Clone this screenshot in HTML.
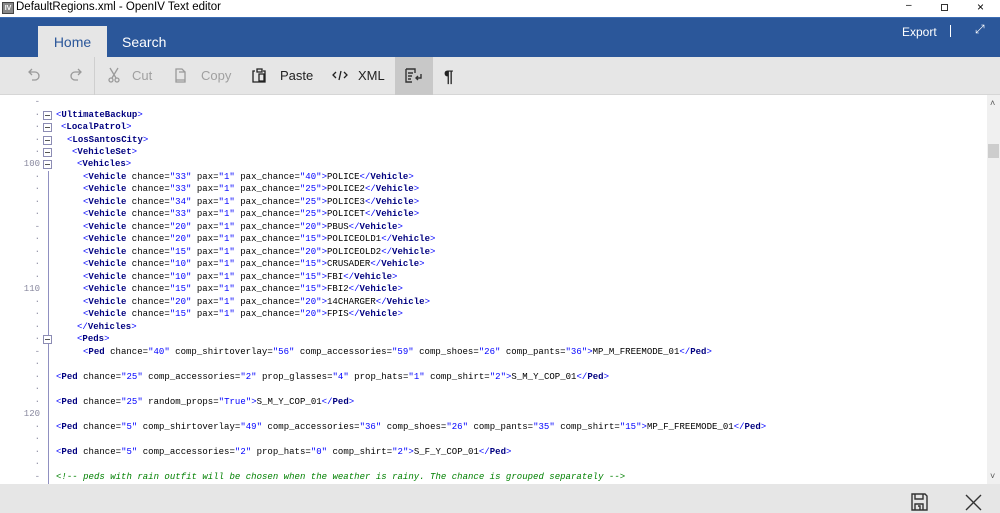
<!DOCTYPE html>
<html><head><meta charset="utf-8"><style>
*{margin:0;padding:0;box-sizing:border-box}
body{width:1000px;height:513px;overflow:hidden;background:#fff;font-family:"Liberation Sans",sans-serif;position:relative}
.abs{position:absolute}
#title{left:0;top:0;width:1000px;height:17px;background:#fff;font-size:11px;color:#000}
#blue{left:0;top:17px;width:1000px;height:40px;background:#2b579a;border-top:1px solid #3c6db4}
#tab{left:38px;top:26px;width:69px;height:31px;background:#e6e6e6;color:#2b579a;font-size:14px;text-align:center;line-height:32px}
#tool{left:0;top:57px;width:1000px;height:38px;background:#e6e6e6;border-bottom:1px solid #d6d6d6}
.tb{position:absolute;font-size:13px;top:68px}
#editor{left:0;top:96px;width:987px;height:388px;background:#fff;overflow:hidden}
#scroll{left:987px;top:95px;width:13px;height:389px;background:#f0f0f0}
#bottom{left:0;top:484px;width:1000px;height:29px;background:#e6e6e6}
.ln{position:absolute;left:0;width:40px;text-align:right;font-family:"Liberation Mono",monospace;font-size:9px;color:#8a8aa0}
.code{position:absolute;white-space:pre;font-family:"Liberation Mono",monospace;font-size:9px;letter-spacing:0.02px;color:#000}
.fold{position:absolute;left:43px;width:9px;height:9px;border:1px solid #8c8cb4;background:#fff}
.fold:after{content:"";position:absolute;left:1px;top:3px;width:5px;height:1px;background:#555}
.b{color:#0000ff}.t{color:#00007f;font-weight:bold}.v{color:#0000ff}.c{color:#008000;font-style:italic}
</style></head><body>
<div id="title" class="abs">
<div class="abs" style="left:2px;top:2px;width:12px;height:12px;background:#888;border:1px solid #444;font-size:7px;color:#fff;text-align:center;line-height:11px;font-weight:bold">IV</div>
<div class="abs" style="left:16px;top:1px;font-size:11.5px">DefaultRegions.xml - OpenIV Text editor</div>
<div class="abs" style="left:906px;top:0;font-size:10px">–</div>
<div class="abs" style="left:941px;top:4px;width:7px;height:7px;border:1px solid #333"></div>
<div class="abs" style="left:977px;top:0;font-size:12px">×</div>
</div>
<div id="blue" class="abs">
<div class="abs" style="left:122px;top:16px;color:#fff;font-size:14px">Search</div>
<div class="abs" style="left:902px;top:7px;color:#fff;font-size:12px">Export</div>
<div class="abs" style="left:950px;top:7px;width:1px;height:12px;background:#fff"></div>
<div class="abs" style="left:975px;top:4px;color:#fff;font-size:12px">⤢</div>
</div>
<div id="tab" class="abs">Home</div>
<div id="tool" class="abs">
<div class="abs" style="left:94px;top:0;width:1px;height:38px;background:#cfcfcf"></div>
<div class="abs" style="left:395px;top:0;width:38px;height:38px;background:#c8c8c8"></div>
</div>
<svg class="abs" style="left:0;top:57px" width="470" height="38" fill="none" stroke-width="1.3">
<path d="M32 12 l-3 3 l3 3 M29 15 h6 a4 4 0 0 1 0 8 h-3" stroke="#9a9a9a"/>
<path d="M78 12 l3 3 l-3 3 M81 15 h-6 a4 4 0 0 0 0 8 h3" stroke="#9a9a9a"/>
<path d="M110 11 l6 10 M118 11 l-6 10" stroke="#9a9a9a"/><circle cx="111" cy="23" r="2" stroke="#9a9a9a"/><circle cx="117" cy="23" r="2" stroke="#9a9a9a"/>
<path d="M176 12 h6 l3 3 v8 h-9 z M179 15 h6 v10 h-9 v-2" stroke="#9a9a9a"/>
<path d="M255 14 h-2 v11 h12 v-11 h-2 M257 12 h5 v3 h-5 z M259 17 h5 v7 h-5 z" stroke="#222"/>
<path d="M336 15 l-3 3 l3 3 M344 15 l3 3 l-3 3 M341 14 l-2 9" stroke="#222"/>
<path d="M406 12 h9 v4 M406 12 v13 h6 M408 16 h5 M408 19 h4 M408 22 h3 M421 17 v4 h-5 M418 19 l-2 2 l2 2" stroke="#333" stroke-width="1.4"/>
<text x="444" y="25" font-family="Liberation Sans" font-size="17" font-weight="bold" fill="#222" stroke="none">¶</text>
</svg>
<div class="tb" style="left:132px;color:#a0a0a0">Cut</div>
<div class="tb" style="left:201px;color:#a0a0a0">Copy</div>
<div class="tb" style="left:280px;color:#222">Paste</div>
<div class="tb" style="left:358px;color:#222">XML</div>
<div id="editor" class="abs">
<div class="abs" style="left:48px;top:75px;width:1px;height:314px;background:#9090c0"></div>
<div class="ln" style="top:1px">-</div>
<div class="ln" style="top:14px">·</div><div class="fold" style="top:15px"></div>
<div class="ln" style="top:26px">·</div><div class="fold" style="top:27px"></div>
<div class="ln" style="top:39px">·</div><div class="fold" style="top:40px"></div>
<div class="ln" style="top:51px">·</div><div class="fold" style="top:52px"></div>
<div class="ln" style="top:63px">100</div><div class="fold" style="top:64px"></div>
<div class="ln" style="top:76px">·</div><div class="ln" style="top:88px">·</div><div class="ln" style="top:101px">·</div><div class="ln" style="top:113px">·</div><div class="ln" style="top:126px">-</div><div class="ln" style="top:138px">·</div><div class="ln" style="top:151px">·</div><div class="ln" style="top:163px">·</div><div class="ln" style="top:176px">·</div>
<div class="ln" style="top:188px">110</div><div class="ln" style="top:201px">·</div><div class="ln" style="top:213px">·</div><div class="ln" style="top:226px">·</div>
<div class="ln" style="top:238px">·</div><div class="fold" style="top:239px"></div>
<div class="ln" style="top:251px">-</div><div class="ln" style="top:263px">·</div><div class="ln" style="top:276px">·</div><div class="ln" style="top:288px">·</div><div class="ln" style="top:301px">·</div>
<div class="ln" style="top:313px">120</div><div class="ln" style="top:326px">·</div><div class="ln" style="top:338px">·</div><div class="ln" style="top:351px">·</div><div class="ln" style="top:363px">·</div><div class="ln" style="top:376px">-</div>

<div class="code" style="left:56px;top:14px"><span class="b">&lt;</span><span class="t">UltimateBackup</span><span class="b">&gt;</span></div>
<div class="code" style="left:61px;top:26px"><span class="b">&lt;</span><span class="t">LocalPatrol</span><span class="b">&gt;</span></div>
<div class="code" style="left:67px;top:39px"><span class="b">&lt;</span><span class="t">LosSantosCity</span><span class="b">&gt;</span></div>
<div class="code" style="left:72px;top:51px"><span class="b">&lt;</span><span class="t">VehicleSet</span><span class="b">&gt;</span></div>
<div class="code" style="left:77px;top:63px"><span class="b">&lt;</span><span class="t">Vehicles</span><span class="b">&gt;</span></div>
<div class="code" style="left:83px;top:76px"><span class="b">&lt;</span><span class="t">Vehicle</span> chance=<span class="v">"33"</span> pax=<span class="v">"1"</span> pax_chance=<span class="v">"40"</span><span class="b">&gt;</span>POLICE<span class="b">&lt;/</span><span class="t">Vehicle</span><span class="b">&gt;</span></div>
<div class="code" style="left:83px;top:88px"><span class="b">&lt;</span><span class="t">Vehicle</span> chance=<span class="v">"33"</span> pax=<span class="v">"1"</span> pax_chance=<span class="v">"25"</span><span class="b">&gt;</span>POLICE2<span class="b">&lt;/</span><span class="t">Vehicle</span><span class="b">&gt;</span></div>
<div class="code" style="left:83px;top:101px"><span class="b">&lt;</span><span class="t">Vehicle</span> chance=<span class="v">"34"</span> pax=<span class="v">"1"</span> pax_chance=<span class="v">"25"</span><span class="b">&gt;</span>POLICE3<span class="b">&lt;/</span><span class="t">Vehicle</span><span class="b">&gt;</span></div>
<div class="code" style="left:83px;top:113px"><span class="b">&lt;</span><span class="t">Vehicle</span> chance=<span class="v">"33"</span> pax=<span class="v">"1"</span> pax_chance=<span class="v">"25"</span><span class="b">&gt;</span>POLICET<span class="b">&lt;/</span><span class="t">Vehicle</span><span class="b">&gt;</span></div>
<div class="code" style="left:83px;top:126px"><span class="b">&lt;</span><span class="t">Vehicle</span> chance=<span class="v">"20"</span> pax=<span class="v">"1"</span> pax_chance=<span class="v">"20"</span><span class="b">&gt;</span>PBUS<span class="b">&lt;/</span><span class="t">Vehicle</span><span class="b">&gt;</span></div>
<div class="code" style="left:83px;top:138px"><span class="b">&lt;</span><span class="t">Vehicle</span> chance=<span class="v">"20"</span> pax=<span class="v">"1"</span> pax_chance=<span class="v">"15"</span><span class="b">&gt;</span>POLICEOLD1<span class="b">&lt;/</span><span class="t">Vehicle</span><span class="b">&gt;</span></div>
<div class="code" style="left:83px;top:151px"><span class="b">&lt;</span><span class="t">Vehicle</span> chance=<span class="v">"15"</span> pax=<span class="v">"1"</span> pax_chance=<span class="v">"20"</span><span class="b">&gt;</span>POLICEOLD2<span class="b">&lt;/</span><span class="t">Vehicle</span><span class="b">&gt;</span></div>
<div class="code" style="left:83px;top:163px"><span class="b">&lt;</span><span class="t">Vehicle</span> chance=<span class="v">"10"</span> pax=<span class="v">"1"</span> pax_chance=<span class="v">"15"</span><span class="b">&gt;</span>CRUSADER<span class="b">&lt;/</span><span class="t">Vehicle</span><span class="b">&gt;</span></div>
<div class="code" style="left:83px;top:176px"><span class="b">&lt;</span><span class="t">Vehicle</span> chance=<span class="v">"10"</span> pax=<span class="v">"1"</span> pax_chance=<span class="v">"15"</span><span class="b">&gt;</span>FBI<span class="b">&lt;/</span><span class="t">Vehicle</span><span class="b">&gt;</span></div>
<div class="code" style="left:83px;top:188px"><span class="b">&lt;</span><span class="t">Vehicle</span> chance=<span class="v">"15"</span> pax=<span class="v">"1"</span> pax_chance=<span class="v">"15"</span><span class="b">&gt;</span>FBI2<span class="b">&lt;/</span><span class="t">Vehicle</span><span class="b">&gt;</span></div>
<div class="code" style="left:83px;top:201px"><span class="b">&lt;</span><span class="t">Vehicle</span> chance=<span class="v">"20"</span> pax=<span class="v">"1"</span> pax_chance=<span class="v">"20"</span><span class="b">&gt;</span>14CHARGER<span class="b">&lt;/</span><span class="t">Vehicle</span><span class="b">&gt;</span></div>
<div class="code" style="left:83px;top:213px"><span class="b">&lt;</span><span class="t">Vehicle</span> chance=<span class="v">"15"</span> pax=<span class="v">"1"</span> pax_chance=<span class="v">"20"</span><span class="b">&gt;</span>FPIS<span class="b">&lt;/</span><span class="t">Vehicle</span><span class="b">&gt;</span></div>
<div class="code" style="left:77px;top:226px"><span class="b">&lt;/</span><span class="t">Vehicles</span><span class="b">&gt;</span></div>
<div class="code" style="left:77px;top:238px"><span class="b">&lt;</span><span class="t">Peds</span><span class="b">&gt;</span></div>
<div class="code" style="left:83px;top:251px"><span class="b">&lt;</span><span class="t">Ped</span> chance=<span class="v">"40"</span> comp_shirtoverlay=<span class="v">"56"</span> comp_accessories=<span class="v">"59"</span> comp_shoes=<span class="v">"26"</span> comp_pants=<span class="v">"36"</span><span class="b">&gt;</span>MP_M_FREEMODE_01<span class="b">&lt;/</span><span class="t">Ped</span><span class="b">&gt;</span></div>
<div class="code" style="left:56px;top:276px"><span class="b">&lt;</span><span class="t">Ped</span> chance=<span class="v">"25"</span> comp_accessories=<span class="v">"2"</span> prop_glasses=<span class="v">"4"</span> prop_hats=<span class="v">"1"</span> comp_shirt=<span class="v">"2"</span><span class="b">&gt;</span>S_M_Y_COP_01<span class="b">&lt;/</span><span class="t">Ped</span><span class="b">&gt;</span></div>
<div class="code" style="left:56px;top:301px"><span class="b">&lt;</span><span class="t">Ped</span> chance=<span class="v">"25"</span> random_props=<span class="v">"True"</span><span class="b">&gt;</span>S_M_Y_COP_01<span class="b">&lt;/</span><span class="t">Ped</span><span class="b">&gt;</span></div>
<div class="code" style="left:56px;top:326px"><span class="b">&lt;</span><span class="t">Ped</span> chance=<span class="v">"5"</span> comp_shirtoverlay=<span class="v">"49"</span> comp_accessories=<span class="v">"36"</span> comp_shoes=<span class="v">"26"</span> comp_pants=<span class="v">"35"</span> comp_shirt=<span class="v">"15"</span><span class="b">&gt;</span>MP_F_FREEMODE_01<span class="b">&lt;/</span><span class="t">Ped</span><span class="b">&gt;</span></div>
<div class="code" style="left:56px;top:351px"><span class="b">&lt;</span><span class="t">Ped</span> chance=<span class="v">"5"</span> comp_accessories=<span class="v">"2"</span> prop_hats=<span class="v">"0"</span> comp_shirt=<span class="v">"2"</span><span class="b">&gt;</span>S_F_Y_COP_01<span class="b">&lt;/</span><span class="t">Ped</span><span class="b">&gt;</span></div>
<div class="code c" style="left:56px;top:376px">&lt;!-- peds with rain outfit will be chosen when the weather is rainy. The chance is grouped separately --&gt;</div>
</div>
<div id="scroll" class="abs">
<div class="abs" style="left:3px;top:3px;font-size:9px;color:#555">˄</div>
<div class="abs" style="left:1px;top:49px;width:11px;height:14px;background:#cdcdcd"></div>
<div class="abs" style="left:3px;top:376px;font-size:9px;color:#555">˅</div>
</div>
<div id="bottom" class="abs">
<svg class="abs" style="left:910px;top:9px" width="80" height="20" fill="none" stroke="#333" stroke-width="1.4">
<path d="M2 1 h13 l2 2 v14 h-15 z M5 1 v5 h8 v-5 M5 17 v-6 h8 v6 M8 13 h2 v4"/>
<path d="M56 2 l15 15 M71 2 l-15 15"/>
</svg>
</div>
</body></html>
